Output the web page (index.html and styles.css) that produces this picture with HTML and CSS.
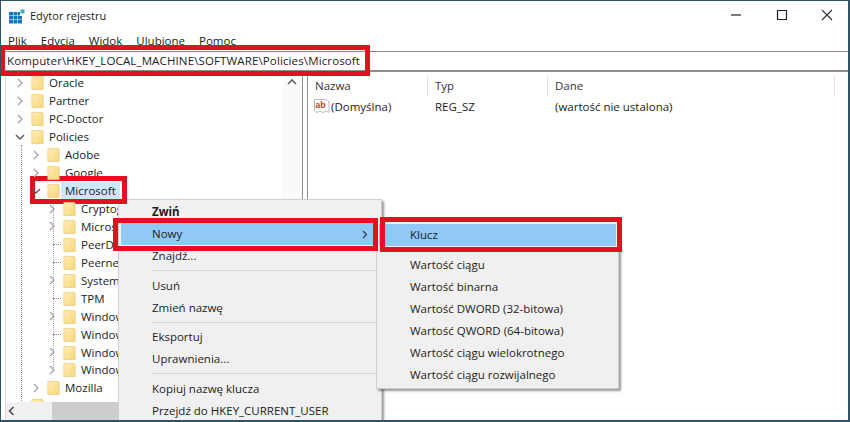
FILE: index.html
```html
<!DOCTYPE html>
<html lang="pl">
<head>
<meta charset="utf-8">
<title>Edytor rejestru</title>
<link rel="stylesheet" href="styles.css">
</head>
<body>
<svg class="defs" width="0" height="0" aria-hidden="true">
  <defs>
    <linearGradient id="fg" x1="0" y1="0" x2="1" y2="1">
      <stop offset="0" stop-color="#fdeeb8"/>
      <stop offset="1" stop-color="#f8d679"/>
    </linearGradient>
    <symbol id="folder" viewBox="0 0 13 16">
      <path d="M.5 1.5h11l1 1v13H.5z" fill="url(#fg)" stroke="#eccb78" stroke-width=".8"/>
    </symbol>
    <symbol id="closed" viewBox="0 0 8 10">
      <path d="M2 1l4 4-4 4" fill="none" stroke="#a6a6a6" stroke-width="1.4"/>
    </symbol>
    <symbol id="open" viewBox="0 0 10 8">
      <path d="M1 2l4 4 4-4" fill="none" stroke="#5a5a5a" stroke-width="1.4"/>
    </symbol>
  </defs>
</svg>
<div class="window">
  <header class="titlebar">
    <svg class="appicon" width="16" height="15" viewBox="0 0 16 15">
      <path d="M0 3h4v3.500H0zM4.500 3h4v3.500h-4zM0 7h4v3.500H0zM4.500 7h4v3.500h-4zM9 7h4v3.500H9zM0 11h4v3.500H0zM4.500 11h4v3.500h-4zM9 11h4v3.500H9z" fill="#1477b5"/>
      <path d="M9 3h2v3.500H9z" fill="#1477b5"/>
      <rect x="11.500" y=".5" width="4" height="4" fill="#3fa9c9"/>
    </svg>
    <span class="apptitle">Edytor rejestru</span>
    <div class="controls">
      <svg width="12" height="12" viewBox="0 0 12 12"><path d="M1 6h10" stroke="#222" stroke-width="1.200"/></svg>
      <svg width="12" height="12" viewBox="0 0 12 12"><path d="M1.500 1.500h9v9h-9z" fill="none" stroke="#222" stroke-width="1.200"/></svg>
      <svg width="12" height="12" viewBox="0 0 12 12"><path d="M1 1l10 10M11 1L1 11" stroke="#333" stroke-width="1.100"/></svg>
    </div>
  </header>
  <nav class="menubar">
    <span>Plik</span><span>Edycja</span><span>Widok</span><span>Ulubione</span><span>Pomoc</span>
  </nav>
  <div class="address">Komputer\HKEY_LOCAL_MACHINE\SOFTWARE\Policies\Microsoft</div>
  <main class="panes">
    <section class="treepane">
      <div class="treearea">
        <ul class="tree">
          <li class="row l1"><svg class="chev"><use href="#closed"/></svg><svg class="folder"><use href="#folder"/></svg><span>Oracle</span></li>
          <li class="row l1"><svg class="chev"><use href="#closed"/></svg><svg class="folder"><use href="#folder"/></svg><span>Partner</span></li>
          <li class="row l1"><svg class="chev"><use href="#closed"/></svg><svg class="folder"><use href="#folder"/></svg><span>PC-Doctor</span></li>
          <li class="row l1"><svg class="chev"><use href="#open"/></svg><svg class="folder"><use href="#folder"/></svg><span>Policies</span></li>
          <li class="row l2"><svg class="chev"><use href="#closed"/></svg><svg class="folder"><use href="#folder"/></svg><span>Adobe</span></li>
          <li class="row l2"><svg class="chev"><use href="#closed"/></svg><svg class="folder"><use href="#folder"/></svg><span>Google</span></li>
          <li class="row l2 selected"><svg class="chev"><use href="#open"/></svg><svg class="folder"><use href="#folder"/></svg><span>Microsoft</span></li>
          <li class="row l3"><svg class="chev"><use href="#closed"/></svg><svg class="folder"><use href="#folder"/></svg><span>Cryptogr</span></li>
          <li class="row l3"><svg class="chev"><use href="#closed"/></svg><svg class="folder"><use href="#folder"/></svg><span>Microsoft</span></li>
          <li class="row l3 leaf"><svg class="chev"></svg><svg class="folder"><use href="#folder"/></svg><span>PeerDist</span></li>
          <li class="row l3 leaf"><svg class="chev"></svg><svg class="folder"><use href="#folder"/></svg><span>Peernet</span></li>
          <li class="row l3"><svg class="chev"><use href="#closed"/></svg><svg class="folder"><use href="#folder"/></svg><span>System</span></li>
          <li class="row l3 leaf"><svg class="chev"></svg><svg class="folder"><use href="#folder"/></svg><span>TPM</span></li>
          <li class="row l3"><svg class="chev"><use href="#closed"/></svg><svg class="folder"><use href="#folder"/></svg><span>Windows</span></li>
          <li class="row l3 leaf"><svg class="chev"></svg><svg class="folder"><use href="#folder"/></svg><span>Windows</span></li>
          <li class="row l3"><svg class="chev"><use href="#closed"/></svg><svg class="folder"><use href="#folder"/></svg><span>Windows</span></li>
          <li class="row l3"><svg class="chev"><use href="#closed"/></svg><svg class="folder"><use href="#folder"/></svg><span>Windows</span></li>
          <li class="row l2"><svg class="chev"><use href="#closed"/></svg><svg class="folder"><use href="#folder"/></svg><span>Mozilla</span></li>
          <li class="row l1"><svg class="chev"></svg><svg class="folder"><use href="#folder"/></svg><span></span></li>
        </ul>
        <div class="vscroll"><svg width="10" height="6" viewBox="0 0 10 6"><path d="M1 5l4-4 4 4" fill="none" stroke="#606060" stroke-width="1.600"/></svg></div>
      </div>
      <div class="hscroll">
        <svg width="7" height="10" viewBox="0 0 7 10"><path d="M5.500 1l-4 4 4 4" fill="none" stroke="#505050" stroke-width="1.600"/></svg>
        <div class="thumb"></div>
      </div>
    </section>
    <section class="listpane">
      <div class="listhead">
        <span class="col-name">Nazwa</span><span class="col-type">Typ</span><span class="col-data">Dane</span>
      </div>
      <div class="listrow">
        <span class="col-name cell-name">
          <svg class="abicon" width="16" height="16" viewBox="0 0 16 16">
            <path d="M.5 1.500h12l2.500 2v11l-3-1.500-3 1.500-3-1.500-3 1.500-2.500-1.500z" fill="#fff" stroke="#a9a9a9" stroke-width=".8"/>
            <text x="1.200" y="10" class="abtext">ab</text>
          </svg>
          (Domyślna)
        </span>
        <span class="col-type">REG_SZ</span>
        <span class="col-data">(wartość nie ustalona)</span>
      </div>
    </section>
  </main>

  <div class="menu main-menu">
    <div class="item strong">Zwiń</div>
    <div class="item active">Nowy<svg class="sub" width="6" height="9" viewBox="0 0 6 9"><path d="M1 1l3.500 3.500L1 8" fill="none" stroke="#333" stroke-width="1.100"/></svg></div>
    <div class="item">Znajdź...</div>
    <div class="sep"></div>
    <div class="item">Usuń</div>
    <div class="item">Zmień nazwę</div>
    <div class="sep"></div>
    <div class="item">Eksportuj</div>
    <div class="item">Uprawnienia...</div>
    <div class="sep"></div>
    <div class="item">Kopiuj nazwę klucza</div>
    <div class="item">Przejdź do HKEY_CURRENT_USER</div>
  </div>

  <div class="menu sub-menu">
    <div class="item active">Klucz</div>
    <div class="sep"></div>
    <div class="item">Wartość ciągu</div>
    <div class="item">Wartość binarna</div>
    <div class="item">Wartość DWORD (32-bitowa)</div>
    <div class="item">Wartość QWORD (64-bitowa)</div>
    <div class="item">Wartość ciągu wielokrotnego</div>
    <div class="item">Wartość ciągu rozwijalnego</div>
  </div>

  <div class="mark mark-address"></div>
  <div class="mark mark-key"></div>
  <div class="mark mark-new"></div>
  <div class="mark mark-klucz"></div>
</div>
</body>
</html>
```
FILE: styles.css
```css
* { box-sizing: border-box; }
html, body { margin: 0; padding: 0; }
body {
  width: 850px;
  height: 422px;
  overflow: hidden;
  background: #fff;
  font-family: "Open Sans", "Noto Sans", sans-serif;
  font-size: 11.5px;
  color: #1c1c1c;
}
.defs { position: absolute; }
.window {
  position: relative;
  width: 850px;
  height: 422px;
  display: flex;
  flex-direction: column;
  overflow: hidden;
  background: #fff;
  border: 1px solid #2c5366;
  border-width: 1px 2px 2px 1px;
}
.titlebar {
  height: 32px;
  flex: none;
  display: flex;
  align-items: center;
  padding-left: 8px;
}
.apptitle { margin-left: 5px; font-size: 11px; margin-top: -3px; }
.appicon { margin-top: -2px; }
.controls {
  margin-left: auto;
  display: flex;
  gap: 33.5px;
  padding-right: 15px;
  margin-top: -5px;
}
.menubar {
  height: 18px;
  flex: none;
  display: flex;
  gap: 14px;
  padding-left: 7px;
  line-height: 16px;
}
.address {
  height: 21px;
  flex: none;
  border-top: 1px solid #8a8a8a;
  border-bottom: 2px solid #8f8f8f;
  padding-left: 6px;
  line-height: 18px;
  font-size: 11.5px;
  letter-spacing: .13px;
}
.panes {
  flex: 1;
  min-height: 0;
  display: flex;
}
.treepane {
  width: 298px;
  flex: none;
  display: flex;
  flex-direction: column;
  border-left: 1px solid #d9d9d9;
  margin-left: 4px;
  border-right: 1px solid #8f8f8f;
}
.treearea {
  flex: 1;
  min-height: 0;
  position: relative;
  display: flex;
  overflow: hidden;
}
.tree {
  flex: 1;
  min-width: 0;
  list-style: none;
  margin: 0;
  padding: 2px 0 0;
  position: relative;
}
.tree::before {
  content: "";
  position: absolute;
  left: 15px;
  top: 73px;
  height: 260px;
  border-left: 1px dotted #8a8a8a;
}
.tree::after {
  content: "";
  position: absolute;
  left: 47px;
  top: 128px;
  height: 170px;
  border-left: 1px dotted #a0a0a0;
}
.row {
  height: 17.95px;
  display: flex;
  align-items: center;
  white-space: nowrap;
  position: relative;
}
.l1 { padding-left: 10px; }
.l2 { padding-left: 26px; }
.l3 { padding-left: 42px; }
.chev { width: 8px; height: 10px; flex: none; position: relative; z-index: 1; }
.row:nth-child(4) .chev,
.selected .chev { width: 10px; height: 8px; margin-left: -1px; margin-right: -1px; }
.folder { width: 13px; height: 15px; flex: none; margin-left: 7px; position: relative; z-index: 1; }
.row span { margin-left: 4px; padding: 0 1px; }
.selected span { background: #cce8ff; margin-left: 1px; padding: 0 4px 0 4px; line-height: 17px; }
.leaf::before {
  content: "";
  position: absolute;
  left: 47px;
  width: 8px;
  border-top: 1px dotted #8a8a8a;
}
.vscroll {
  width: 19px;
  flex: none;
  background: #fafafa;
  padding: 7px 0 0 4px;
}
.vscroll svg { display: block; }
.hscroll {
  height: 18px;
  flex: none;
  background: #f0f0f0;
  display: flex;
  align-items: center;
  padding-left: 2px;
}
.thumb {
  margin-left: 37px;
  width: 228px;
  height: 18px;
  background: #cdcdcd;
}
.listpane {
  flex: 1;
  min-width: 0;
  margin-left: 4px;
  border-left: 1px solid #8f8f8f;
}
.listhead {
  height: 24px;
  display: flex;
  align-items: center;
  color: #333;
  padding-top: 3px;
}
.listhead span {
  height: 20px;
  line-height: 20px;
  border-right: 1px solid #e5e5e5;
}
.col-name { width: 120px; padding-left: 7px; flex: none; }
.col-type { width: 120px; padding-left: 7px; flex: none; }
.col-data { width: 287px; padding-left: 7px; flex: none; }
.listrow { display: flex; height: 20px; align-items: center; }
.cell-name { display: flex; align-items: center; gap: 1px; padding-left: 6px; white-space: nowrap; }
.abtext { font: bold 9px "Liberation Sans", sans-serif; fill: #c8432a; }
.menu {
  position: absolute;
  background: #f0f0f0;
  border: 1px solid #d0d0d0;
  box-shadow: 2px 2px 2px rgba(70, 70, 70, .55);
  padding: 1px 2px;
}
.main-menu { left: 117px; top: 198px; width: 264px; height: 240px; }
.sub-menu { left: 375px; top: 219px; width: 243px; height: 169px; padding-top: 3px; }
.item {
  height: 22px;
  line-height: 22px;
  padding-left: 31px;
  position: relative;
  white-space: nowrap;
}
.strong { font-weight: 700; }
.active { background: #90c8f6; }
.sub { position: absolute; right: 11px; top: 7px; }
.sep {
  height: 7.5px;
  margin: 0 1px 0 30px;
  position: relative;
}
.sep::after {
  content: "";
  position: absolute;
  left: 0;
  right: 0;
  top: 3px;
  border-top: 1px solid #d7d7d7;
}
.mark {
  position: absolute;
  border: 5px solid #e3101f;
  pointer-events: none;
}
.mark-address { left: -1px; top: 44px; width: 370px; height: 31px; }
.mark-key { left: 29px; top: 175px; width: 97px; height: 28px; }
.mark-new { left: 112px; top: 217px; width: 265px; height: 33px; }
.mark-klucz { left: 379px; top: 216px; width: 242px; height: 35px; }
```
